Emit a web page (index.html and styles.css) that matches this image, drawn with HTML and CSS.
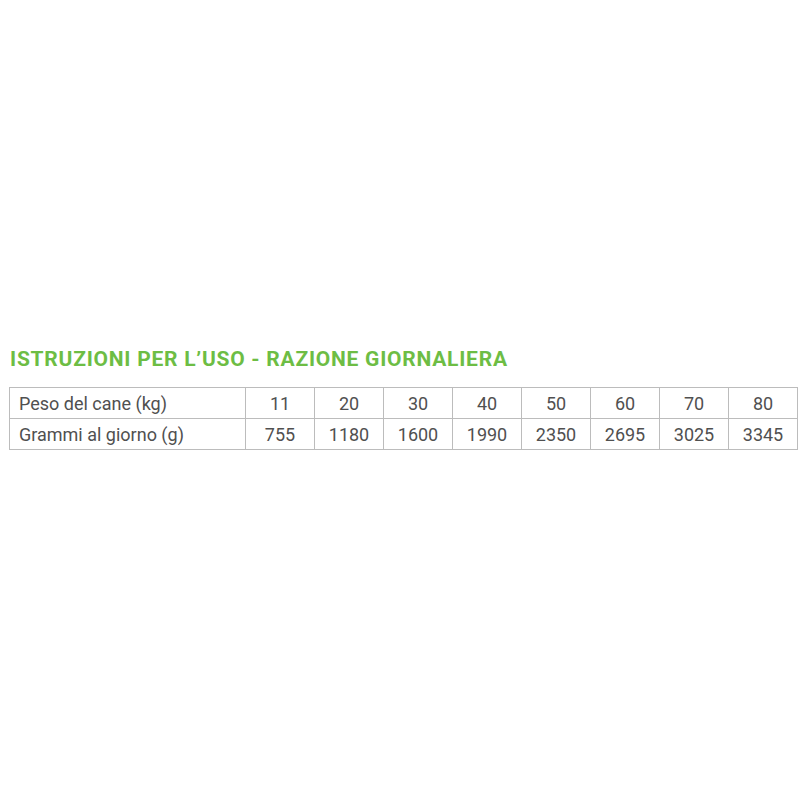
FILE: index.html
```html
<!DOCTYPE html>
<html lang="it">
<head>
<meta charset="utf-8">
<title>Istruzioni per l'uso</title>
<link rel="stylesheet" href="styles.css">
</head>
<body>
<div class="page">
  <h2 class="title">ISTRUZIONI PER L’USO - RAZIONE GIORNALIERA</h2>
  <table class="ration">
    <tr>
      <td class="label">Peso del cane (kg)</td>
      <td>11</td><td>20</td><td>30</td><td>40</td><td>50</td><td>60</td><td>70</td><td>80</td>
    </tr>
    <tr>
      <td class="label">Grammi al giorno (g)</td>
      <td>755</td><td>1180</td><td>1600</td><td>1990</td><td>2350</td><td>2695</td><td>3025</td><td>3345</td>
    </tr>
  </table>
</div>
</body>
</html>
```
FILE: styles.css
```css
html, body {
  margin: 0;
  padding: 0;
  background: #ffffff;
}
.page {
  padding: 347px 6px 0 9px;
  font-family: Roboto, "Open Sans", "Liberation Sans", sans-serif;
}
.title {
  margin: 0 0 0 1px;
  font-size: 21px;
  line-height: 25px;
  font-weight: 700;
  color: #6dbd44;
  letter-spacing: 0.75px;
}
.ration {
  margin-top: 15px;
  width: 785px;
  border-collapse: collapse;
  table-layout: fixed;
  color: #505050;
  font-size: 18px;
}
.ration td {
  border: 1px solid #bcbcbc;
  height: 30px;
  padding: 0;
  text-align: center;
  width: 68px;
}
.ration td.label {
  width: 226px;
  text-align: left;
  padding-left: 9px;
}
```
